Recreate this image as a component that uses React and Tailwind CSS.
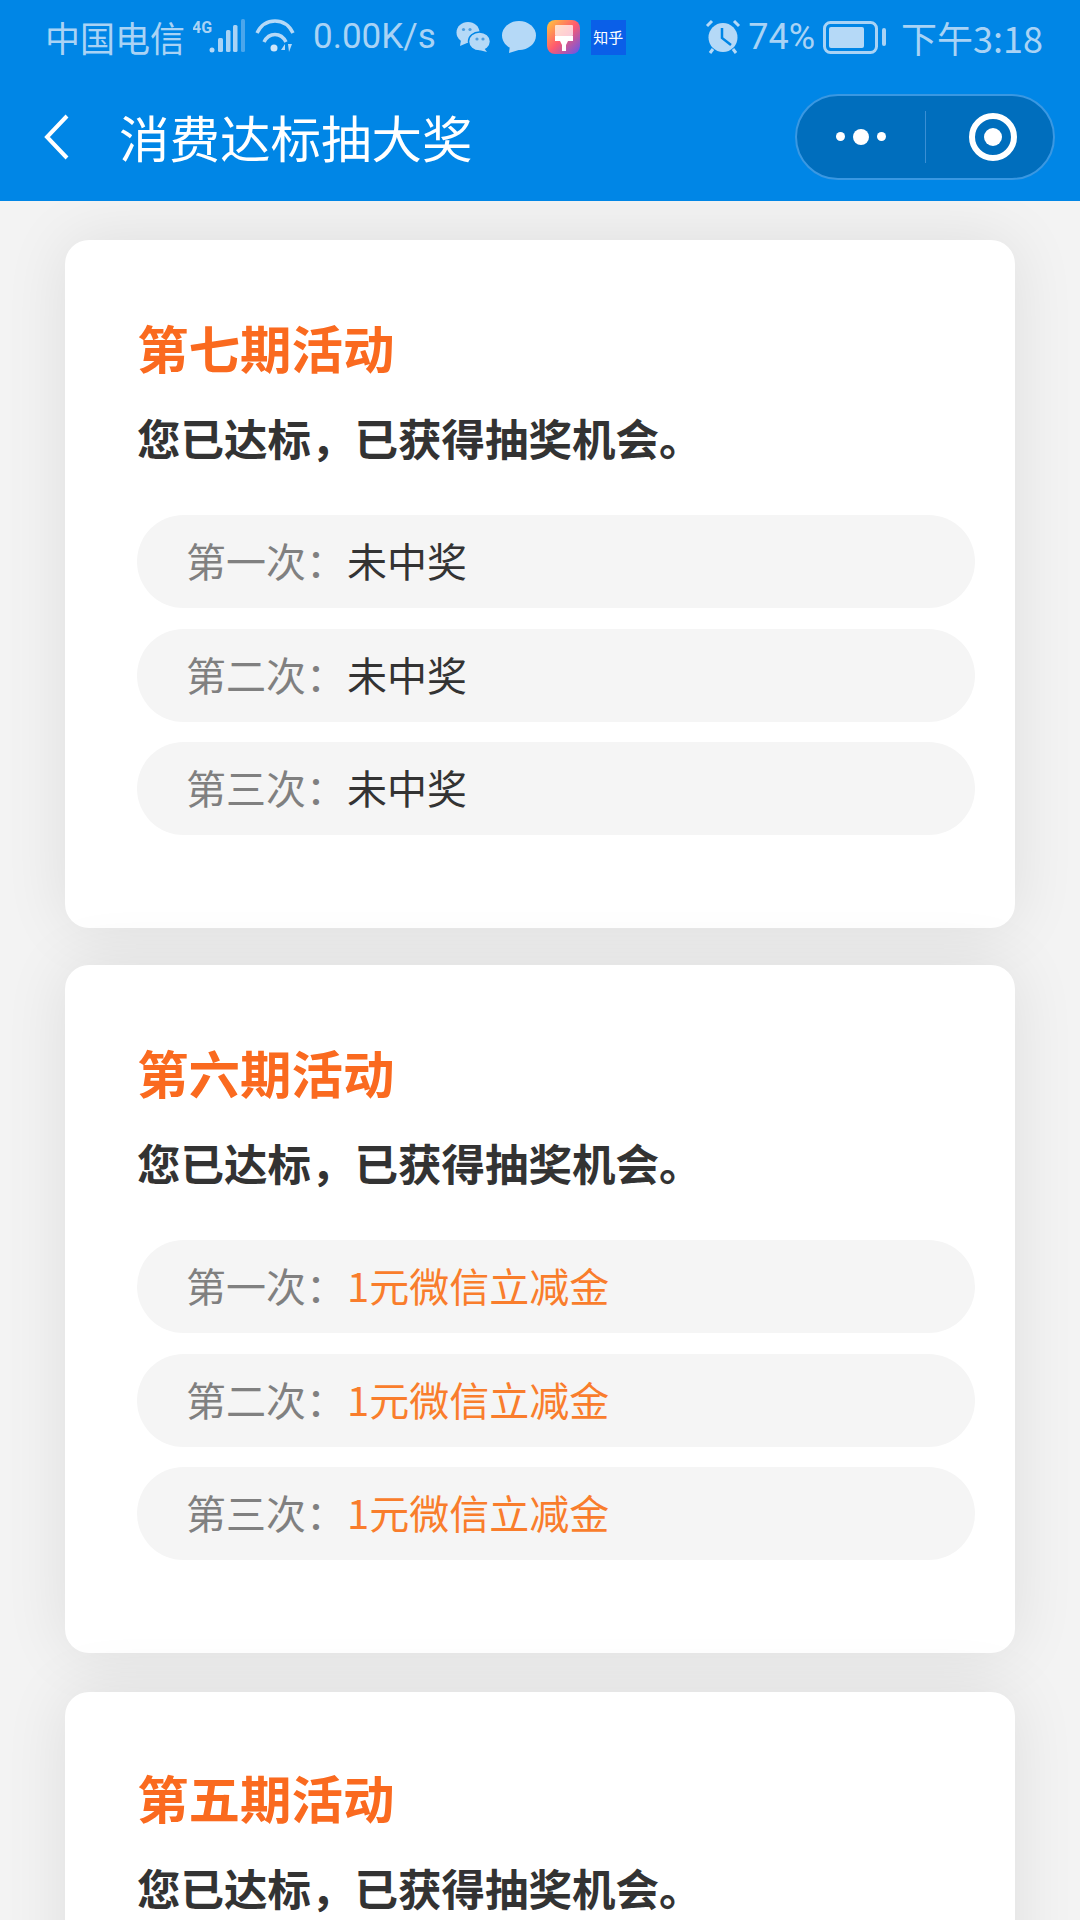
import React from 'react';

const sans = { fontFamily: '"Noto Sans CJK SC", "Noto Sans", sans-serif' };

const periods = [
  { title: '第七期活动', prize: '未中奖', won: false },
  { title: '第六期活动', prize: '1元微信立减金', won: true },
  { title: '第五期活动', prize: '未中奖', won: false },
];

const rounds = ['第一次', '第二次', '第三次'];

const Signal = () => (
  <svg width="52" height="36" viewBox="0 0 52 36">
    <text x="-1" y="14" fontSize="16" fontWeight="700" fill="#a9d3f5" fontFamily="Roboto, sans-serif">4G</text>
    <circle cx="19" cy="31" r="2.5" fill="#b5d9f7" />
    <rect x="25" y="19" width="5" height="14" rx="1.5" fill="#a9d3f5" />
    <rect x="33" y="11" width="4.5" height="22" rx="1.5" fill="#a9d3f5" />
    <rect x="40" y="6" width="4.5" height="27" rx="1.5" fill="#a9d3f5" />
    <rect x="48" y="0" width="4" height="33" rx="1.5" fill="#4aa6ec" />
  </svg>
);

const Wifi = () => (
  <svg width="40" height="36" viewBox="0 0 40 36">
    <path d="M2 14 C10 -2 30 -2 38 14" fill="none" stroke="#b5d9f7" strokeWidth="3.5" />
    <path d="M9 23 C14 13 26 13 31 23" fill="none" stroke="#b5d9f7" strokeWidth="3.5" />
    <circle cx="19" cy="29" r="3.5" fill="#cfe6fa" />
    <path d="M26 31 l4 -6 v6 z M33 25 h4 l-3 8 z" fill="#b5d9f7" />
  </svg>
);

const WeChat = () => (
  <svg width="36" height="32" viewBox="0 0 36 32">
    <ellipse cx="12" cy="11.5" rx="11.5" ry="10.5" fill="#b5d9f7" />
    <path d="M5 19 l-1 6 l7 -3 z" fill="#b5d9f7" />
    <ellipse cx="23.5" cy="20.5" rx="11" ry="9.5" fill="#b5d9f7" stroke="#0086e6" strokeWidth="1.5" />
    <path d="M28 27 l3 4 l-8 -2 z" fill="#b5d9f7" />
    <circle cx="7.5" cy="8.5" r="1.6" fill="#4f9fe0" />
    <circle cx="14" cy="8.5" r="1.6" fill="#4f9fe0" />
    <circle cx="21" cy="18" r="1.6" fill="#4f9fe0" />
    <circle cx="27" cy="18" r="1.6" fill="#4f9fe0" />
  </svg>
);

const Bubble = () => (
  <svg width="34" height="33" viewBox="0 0 34 33">
    <ellipse cx="17" cy="14.5" rx="17" ry="14.5" fill="#b5d9f7" />
    <path d="M8 24 L7 32 L20 28 z" fill="#b5d9f7" />
  </svg>
);

const BrushApp = () => (
  <svg width="33" height="34" viewBox="0 0 33 34">
    <defs>
      <linearGradient id="brushBg" x1="0" y1="0" x2="1" y2="1">
        <stop offset="0" stopColor="#ffc93a" />
        <stop offset="0.5" stopColor="#ff5a6e" />
        <stop offset="1" stopColor="#5f55f0" />
      </linearGradient>
    </defs>
    <rect width="33" height="34" rx="8" fill="url(#brushBg)" />
    <rect x="8" y="5" width="18" height="11" rx="1" fill="#fff" opacity="0.7" />
    <rect x="8" y="16" width="18" height="5" fill="#fff" />
    <path d="M13 21 h8 l-2 4 v6 h-4 v-6 z" fill="#fff" />
  </svg>
);

const Alarm = () => (
  <svg width="36" height="36" viewBox="0 0 36 36">
    <circle cx="18" cy="18.5" r="14.5" fill="#b5d9f7" />
    <path d="M17 9 v10 l9 7" fill="none" stroke="#0086e6" strokeWidth="2.5" />
    <path d="M2 7 L7 2 M34 7 L29 2 M8 30 L5 34 M28 30 L31 34" stroke="#b5d9f7" strokeWidth="3" />
  </svg>
);

const Battery = () => (
  <svg width="63" height="36" viewBox="0 0 63 36">
    <rect x="1.5" y="3.5" width="52" height="30" rx="6" fill="none" stroke="#a9d3f5" strokeWidth="3" />
    <rect x="6" y="8" width="35" height="21" rx="2" fill="#b5d9f7" />
    <rect x="59" y="9" width="4" height="18" rx="2" fill="#a9d3f5" />
  </svg>
);

const Capsule = () => (
  <div className="flex items-center w-[260px] h-[86px] rounded-full bg-[#006ebd] border-2 border-[#3a98e2]">
    <div className="flex items-center justify-center gap-[8px] w-[128px]">
      <span className="w-[9px] h-[9px] rounded-full bg-white" />
      <span className="w-[16px] h-[16px] rounded-full bg-white" />
      <span className="w-[9px] h-[9px] rounded-full bg-white" />
    </div>
    <div className="w-[1px] h-[52px] bg-[#3a8fd4]" />
    <div className="flex flex-1 items-center justify-center pl-[6px]">
      <div className="flex items-center justify-center w-[48px] h-[48px] rounded-full border-[6px] border-white">
        <span className="w-[18px] h-[18px] rounded-full bg-white" />
      </div>
    </div>
  </div>
);

const Card = ({ title, prize, won }) => (
  <div className="shrink-0 h-[688px] rounded-[24px] bg-white pl-[72px] pr-[40px] pt-[75px] last:mt-[2px] last:pt-[73px] shadow-[0_0_65px_rgba(0,0,0,0.09)]">
    <h2 className="text-[51.5px] leading-[64px] font-bold text-[#fa6a1f]">{title}</h2>
    <p className="mt-[33px] text-[43.5px] leading-[52px] font-bold text-[#333333]">您已达标，已获得抽奖机会。</p>
    <div className="mt-[51px] flex flex-col gap-[20.5px]">
      {rounds.map((r) => (
        <div key={r} className="flex items-center h-[93px] rounded-full bg-[#f5f5f5] pl-[49px] pb-[3px] text-[40px]">
          <span className="text-[#808080]">{r}：</span>
          <span className={won ? 'text-[#f97d2c] ml-[1px]' : 'text-[#333333] ml-[1px]'}>{prize}</span>
        </div>
      ))}
    </div>
  </div>
);

const App = () => {
  return (
    <div className="w-[1080px] h-[1920px] overflow-hidden flex flex-col bg-[#f3f3f3]" style={sans}>
      <header className="shrink-0 h-[201px] bg-[#0086e6] text-white relative z-10">
        <div className="flex items-center h-[74px] pl-[45px] pr-[37px] text-[35px] text-[#a9d3f5]">
          <span>中国电信</span>
          <span className="ml-[8px]"><Signal /></span>
          <span className="ml-[10px]"><Wifi /></span>
          <span className="ml-[18px] text-[35px] font-['Roboto']">0.00K/s</span>
          <span className="ml-[20px]"><WeChat /></span>
          <span className="ml-[10px]"><Bubble /></span>
          <span className="ml-[11px]"><BrushApp /></span>
          <span className="ml-[11px] flex items-center justify-center w-[35px] h-[35px] bg-[#0a5fe8] text-white text-[15px]">知乎</span>
          <span className="ml-auto"><Alarm /></span>
          <span className="ml-[7px] text-[36px] font-['Roboto']">74%</span>
          <span className="ml-[8px]"><Battery /></span>
          <span className="ml-[15px] text-[36px]">下午3:18</span>
        </div>
        <div className="flex items-center h-[127px] pl-[44px] pr-[25px] pb-[2px]">
          <svg width="26" height="46" viewBox="0 0 26 46">
            <path d="M23 2 L3 23 L23 44" fill="none" stroke="#fff" strokeWidth="4" />
          </svg>
          <h1 className="ml-[49px] text-[50.5px] leading-none font-normal">消费达标抽大奖</h1>
          <div className="ml-auto">
            <Capsule />
          </div>
        </div>
      </header>
      <main className="flex flex-col gap-[37px] px-[65px] pt-[39px]">
        {periods.map((p) => (
          <Card key={p.title} {...p} />
        ))}
      </main>
    </div>
  );
};

export default App;
